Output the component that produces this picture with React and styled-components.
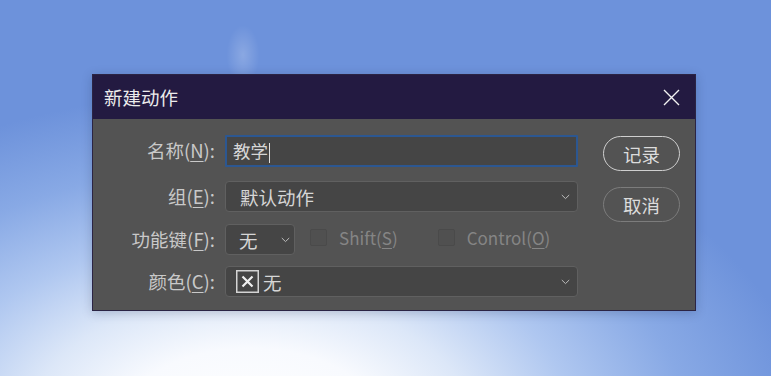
import React from "react";
import styled, { createGlobalStyle } from "styled-components";

const Global = createGlobalStyle`
  html, body { margin: 0; padding: 0; }
  body {
    width: 771px; height: 376px; overflow: hidden;
    font-family: "Noto Sans CJK SC", "Noto Sans", sans-serif;
  }
`;

const Desktop = styled.div`
  width: 771px;
  height: 376px;
  box-sizing: border-box;
  padding: 74px 0 0 92px;
  background:
    radial-gradient(ellipse 22px 40px at 243px 55px, rgba(255,255,255,0.2), rgba(255,255,255,0) 75%),
    radial-gradient(ellipse 560px 340px at 250px 430px, #ffffff 0%, #f8fafe 24%, #dce7f8 40%, #afc7f0 58%, #88a9e5 78%, #6d92db 100%),
    #5f86d6;
`;

const Dialog = styled.div`
  width: 604px;
  height: 237px;
  box-sizing: border-box;
  border: 1px solid #2b2444;
  background: #535353;
  display: flex;
  flex-direction: column;
  box-shadow: 0 2px 10px rgba(20, 30, 70, 0.22);
`;

const TitleBar = styled.div`
  height: 44px;
  flex: none;
  background: #231a41;
  display: flex;
  align-items: center;
  justify-content: space-between;
  padding: 0 15px 0 11px;
  color: #ececec;
  font-size: 18.5px;
`;

const CloseIcon = styled.svg`
  width: 17px;
  height: 17px;
  display: block;
`;

const Body = styled.div`
  flex: 1;
  display: flex;
  padding: 16px 16px 0 0;
`;

const Form = styled.div`
  display: flex;
  flex-direction: column;
`;

const Row = styled.div`
  display: flex;
  align-items: center;
  margin-top: ${(p) => p.$mt || 0}px;
`;

const Label = styled.div`
  width: 122px;
  flex: none;
  text-align: right;
  color: #c9c9c9;
  font-size: 18.5px;
  padding-right: 10px;
  box-sizing: content-box;
  white-space: nowrap;
  position: relative;
  top: -1px;
  u { text-decoration-thickness: 1px; text-underline-offset: 3px; }
`;

const Field = styled.div`
  width: ${(p) => p.$w}px;
  height: ${(p) => p.$h}px;
  box-sizing: border-box;
  flex: none;
  background: #454545;
  border: ${(p) => (p.$focus ? "2px solid #2c5791" : "1px solid #606060")};
  border-radius: ${(p) => (p.$focus ? 1 : 4)}px;
  display: flex;
  align-items: center;
  padding-left: ${(p) => p.$pl}px;
  padding-right: ${(p) => p.$pr || 0}px;
  color: #d6d6d6;
  font-size: ${(p) => p.$fs || 17.5}px;
  gap: 4px;
`;

const Value = styled.span`
  flex: 1;
  white-space: nowrap;
`;

const Caret = styled.span`
  display: inline-block;
  width: 1px;
  height: 20px;
  background: #e0e0e0;
  vertical-align: middle;
  margin-left: 1px;
  position: relative;
  top: -1px;
`;

const Chevron = styled.svg`
  width: 9px;
  height: 6px;
  flex: none;
  display: block;
`;

const NoneSwatch = styled.svg`
  width: 23px;
  height: 23px;
  flex: none;
  display: block;
`;

const Check = styled.label`
  display: flex;
  align-items: center;
  margin-left: ${(p) => p.$ml}px;
  color: #858585;
  font-size: 17px;
  gap: 12px;
  position: relative;
  top: -2px;
  u { text-decoration-thickness: 1px; text-underline-offset: 3px; }
`;

const Box = styled.span`
  width: 17px;
  height: 17px;
  box-sizing: border-box;
  border: 1px solid #4a4a4a;
  background: #505050;
  border-radius: 2px;
`;

const Buttons = styled.div`
  display: flex;
  flex-direction: column;
  gap: 16px;
  margin-left: 25px;
  margin-top: 1px;
`;

const Button = styled.button`
  width: 77px;
  height: 35px;
  border-radius: 18px;
  background: transparent;
  border: 1.5px solid ${(p) => (p.$primary ? "#cfcfcf" : "#7c7c7c")};
  color: #dcdcdc;
  font-family: "Noto Sans CJK SC", "Noto Sans", sans-serif;
  font-size: 18.5px;
  padding: 0;
  display: flex;
  align-items: center;
  justify-content: center;
`;

const ChevronDown = () => (
  <Chevron viewBox="0 0 9 6">
    <path d="M0.8 1 L4.5 4.6 L8.2 1" fill="none" stroke="#bdbdbd" strokeWidth="1" />
  </Chevron>
);

export default function App() {
  return (
    <>
      <Global />
      <Desktop>
        <Dialog>
          <TitleBar>
            <span>新建动作</span>
            <CloseIcon viewBox="0 0 17 17">
              <path d="M1 1 L16 16 M16 1 L1 16" stroke="#f2f2f2" strokeWidth="1.4" />
            </CloseIcon>
          </TitleBar>
          <Body>
            <Form>
              <Row>
                <Label>名称(<u>N</u>):</Label>
                <Field $w={353} $h={32} $pl={6} $focus>
                  <Value>教学<Caret /></Value>
                </Field>
              </Row>
              <Row $mt={14}>
                <Label>组(<u>E</u>):</Label>
                <Field $w={353} $h={31} $pl={14} $pr={7} $fs={18.5}>
                  <Value>默认动作</Value>
                  <ChevronDown />
                </Field>
              </Row>
              <Row $mt={12}>
                <Label>功能键(<u>F</u>):</Label>
                <Field $w={70} $h={31} $pl={13} $pr={4} $fs={18.5}>
                  <Value>无</Value>
                  <ChevronDown />
                </Field>
                <Check $ml={15}>
                  <Box />
                  <span>Shift(<u>S</u>)</span>
                </Check>
                <Check $ml={40}>
                  <Box />
                  <span>Control(<u>O</u>)</span>
                </Check>
              </Row>
              <Row $mt={11}>
                <Label>颜色(<u>C</u>):</Label>
                <Field $w={353} $h={31} $pl={10} $pr={7} $fs={18.5}>
                  <NoneSwatch viewBox="0 0 23 23">
                    <rect x="0.75" y="0.75" width="21.5" height="21.5" fill="none" stroke="#d4d4d4" strokeWidth="1.5" />
                    <path d="M6.5 6.5 L16.5 16.5 M16.5 6.5 L6.5 16.5" stroke="#f0f0f0" strokeWidth="2.2" />
                  </NoneSwatch>
                  <Value>无</Value>
                  <ChevronDown />
                </Field>
              </Row>
            </Form>
            <Buttons>
              <Button $primary>记录</Button>
              <Button>取消</Button>
            </Buttons>
          </Body>
        </Dialog>
      </Desktop>
    </>
  );
}
